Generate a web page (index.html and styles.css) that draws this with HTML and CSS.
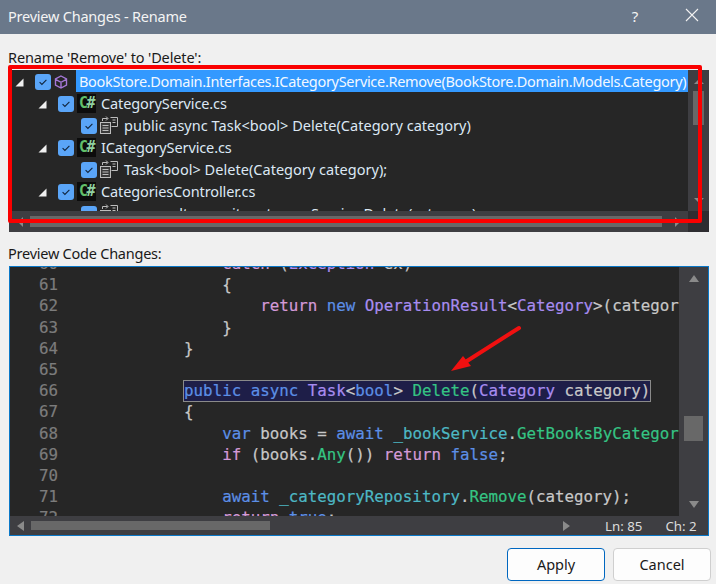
FILE: index.html
```html
<!DOCTYPE html>
<html lang="en">
<head>
<meta charset="utf-8">
<title>Preview Changes - Rename</title>
<link rel="stylesheet" href="styles.css">
</head>
<body>
<svg width="0" height="0" class="defs">
  <defs>
    <symbol id="check" viewBox="0 0 16 16"><rect x="0" y="0" width="16" height="16" rx="3" fill="#5aa5f8"/><path d="M4.6 8.2l2.3 2.3 4.500-4.600" fill="none" stroke="#10243c" stroke-width="1.100"/></symbol>
    <symbol id="twisty" viewBox="0 0 9 9"><path d="M8.500 0.500v8h-8z" fill="#f0f0f0"/></symbol>
    <symbol id="method" viewBox="0 0 18 18"><g fill="none" stroke="#bdbdbd" stroke-width="1"><rect x="0.500" y="6.500" width="10" height="11" fill="#3a3a3a"/><path d="M2.500 9.500h6M2.500 12h6M2.500 14.500h6"/><path d="M10.500 1.500h7v9h-6"/><path d="M12.500 4h3M12.500 6.500h3"/><path d="M2.500 5V2.500h5M6 0.500l2 2-2 2"/></g></symbol>
    <symbol id="cube" viewBox="0 0 14 14"><path d="M7 1l5.500 3v6L7 13l-5.500-3V4zM1.500 4.300L7 7.300l5.500-3M7 7.300V13" fill="none" stroke="#a678d8" stroke-width="1.400"/></symbol>
  </defs>
</svg>
<main class="dialog">
  <header class="titlebar">
    <span class="title">Preview Changes - Rename</span>
    <span class="help">?</span>
    <svg class="close" width="14" height="14" viewBox="0 0 14 14"><path d="M1 1l12 12M13 1L1 13" stroke="#f2f2f2" stroke-width="1.100" fill="none"/></svg>
  </header>
  <section class="content">
    <div class="label label-tree">Rename 'Remove' to 'Delete':</div>
    <div class="panel tree-panel">
      <div class="tree">
        <div class="row lvl0">
          <svg class="twisty"><use href="#twisty"/></svg>
          <svg class="check"><use href="#check"/></svg>
          <svg class="cube"><use href="#cube"/></svg>
          <span class="row-text selected">BookStore.Domain.Interfaces.ICategoryService.Remove(BookStore.Domain.Models.Category)</span>
        </div>
        <div class="row lvl1">
          <svg class="twisty"><use href="#twisty"/></svg>
          <svg class="check"><use href="#check"/></svg>
          <span class="csharp">C<em class="sharp">#</em></span>
          <span class="row-text">CategoryService.cs</span>
        </div>
        <div class="row lvl2">
          <svg class="check"><use href="#check"/></svg>
          <svg class="method"><use href="#method"/></svg>
          <span class="row-text member">public async Task&lt;bool&gt; Delete(Category category)</span>
        </div>
        <div class="row lvl1">
          <svg class="twisty"><use href="#twisty"/></svg>
          <svg class="check"><use href="#check"/></svg>
          <span class="csharp">C<em class="sharp">#</em></span>
          <span class="row-text">ICategoryService.cs</span>
        </div>
        <div class="row lvl2">
          <svg class="check"><use href="#check"/></svg>
          <svg class="method"><use href="#method"/></svg>
          <span class="row-text member">Task&lt;bool&gt; Delete(Category category);</span>
        </div>
        <div class="row lvl1">
          <svg class="twisty"><use href="#twisty"/></svg>
          <svg class="check"><use href="#check"/></svg>
          <span class="csharp">C<em class="sharp">#</em></span>
          <span class="row-text">CategoriesController.cs</span>
        </div>
        <div class="row lvl2">
          <svg class="check"><use href="#check"/></svg>
          <svg class="method"><use href="#method"/></svg>
          <span class="row-text member">var result = await _categoryService.Delete(category);</span>
        </div>
      </div>
      <div class="vbar vbar-tree">
        <span class="arrow-up"></span>
        <span class="vthumb"></span>
        <span class="arrow-down"></span>
      </div>
      <div class="hbar hbar-tree">
        <span class="arrow-left"></span>
        <span class="hthumb"></span>
        <span class="arrow-right"></span>
      </div>
      <div class="corner"></div>
    </div>
    <div class="label label-code">Preview Code Changes:</div>
    <div class="panel code-panel">
      <div class="code">
<div class="ln"><span class="no">60</span><span class="src">            <b class="pk">catch</b> (<b class="ty">Exception</b> <b class="tx">ex</b>)</span></div>
<div class="ln"><span class="no">61</span><span class="src">            {</span></div>
<div class="ln"><span class="no">62</span><span class="src">                <b class="pk">return</b> <b class="kw">new</b> <b class="ty">OperationResult</b>&lt;<b class="ty">Category</b>&gt;(categor</span></div>
<div class="ln"><span class="no">63</span><span class="src">            }</span></div>
<div class="ln"><span class="no">64</span><span class="src">        }</span></div>
<div class="ln"><span class="no">65</span><span class="src"></span></div>
<div class="ln"><span class="no">66</span><span class="src">        <i class="hl"><b class="kw">public</b> <b class="kw">async</b> <b class="ty">Task</b>&lt;<b class="kw">bool</b>&gt; <b class="fn">Delete</b>(<b class="ty">Category</b> category)</i></span></div>
<div class="ln"><span class="no">67</span><span class="src">        {</span></div>
<div class="ln"><span class="no">68</span><span class="src">            <b class="kw">var</b> books = <b class="kw">await</b> <b class="fd">_bookService</b>.<b class="fn">GetBooksByCategor</b></span></div>
<div class="ln"><span class="no">69</span><span class="src">            <b class="pk">if</b> (books.<b class="fn">Any</b>()) <b class="pk">return</b> <b class="kw">false</b>;</span></div>
<div class="ln"><span class="no">70</span><span class="src"></span></div>
<div class="ln"><span class="no">71</span><span class="src">            <b class="kw">await</b> <b class="fd">_categoryRepository</b>.<b class="fn">Remove</b>(category);</span></div>
<div class="ln"><span class="no">72</span><span class="src">            <b class="pk">return</b> <b class="kw">true</b>;</span></div>
      </div>
      <div class="vbar vbar-code">
        <span class="arrow-up big"></span>
        <span class="vthumb"></span>
        <span class="arrow-down big"></span>
      </div>
      <div class="hbar hbar-code">
        <span class="arrow-left big"></span>
        <span class="hthumb"></span>
        <span class="arrow-right big"></span>
        <span class="status">Ln: 85</span>
        <span class="status status-ch">Ch: 2</span>
      </div>
    </div>
    <div class="actions">
      <button class="btn btn-primary">Apply</button>
      <button class="btn">Cancel</button>
    </div>
  </section>
  <div class="annot-box"></div>
  <svg class="annot-arrow" width="80" height="60" viewBox="0 0 80 60"><path d="M76 10L24 43" stroke="#f01010" stroke-width="4" stroke-linecap="round" fill="none"/><path d="M8 53L20 38L28 48z" fill="#f01010"/></svg>
</main>
</body>
</html>
```
FILE: styles.css
```css
* { box-sizing: border-box; }
html, body { margin: 0; padding: 0; }
body { width: 716px; height: 584px; overflow: hidden; background: #f0f0f0; }
.defs { position: absolute; }
.dialog { position: relative; width: 716px; height: 584px; font-family: "Noto Sans", "Open Sans", sans-serif; }

.titlebar { height: 34px; background: #6a788a; color: #f4f4f4; display: flex; align-items: center; padding: 0 0 3px 8px; font-size: 14.500px; }
.title { flex: 1; letter-spacing: -0.22px; }
.help { width: 14px; margin-right: 43px; font-size: 15px; text-align: center; }
.close { margin: 0 17px 1px 0; }

.content { padding: 0 5px 0 9px; }
.label { font-size: 14.500px; color: #1a1a1a; line-height: 20px; letter-spacing: -0.13px; margin-left: -1px; }
.label-tree { padding-top: 13px; height: 36px; }
.label-code { padding-top: 11px; height: 34px; letter-spacing: -0.24px; }

.panel { width: 700px; display: grid; background: #262626; overflow: hidden; }
.tree-panel { height: 162px; grid-template-columns: 679px 21px; grid-template-rows: 141px 21px; background: #262626; }
.code-panel { height: 270px; grid-template-columns: 669px 29px; grid-template-rows: 249px 19px; border: 1px solid #0a78c8; }

.tree { overflow: hidden; color: #dce8f4; font-size: 14.500px; }
.row { height: 22px; display: flex; align-items: center; white-space: nowrap; }
.lvl0 { padding-left: 6px; }
.lvl1 { padding-left: 29px; }
.lvl2 { padding-left: 72px; }
.twisty { width: 9px; height: 9px; margin: 2px 11px 0 0; flex: none; }
.check { width: 16px; height: 16px; flex: none; margin: 2px 3px 0 0; }
.cube { width: 14px; height: 14px; margin: 2px 0 0 0; flex: none; }
.method { width: 18px; height: 18px; margin: 0 6px 0 0; flex: none; }
.csharp { width: 19px; height: 19px; background: #0c0c0c; color: #62c06a; font: bold 15px/19px "DejaVu Sans Mono", monospace; letter-spacing: -1.500px; padding-left: 2px; flex: none; margin-right: 5px; }
.sharp { font-style: normal; color: #8fd0a0; }
.row-text { display: block; letter-spacing: -0.12px; }
.member { letter-spacing: 0.03px; }
.selected { background: #3399ff; color: #f2f8ff; width: 612px; height: 22px; line-height: 22px; padding-left: 3px; overflow: hidden; flex: none; margin-left: 8px; letter-spacing: -0.31px; }

.vbar, .hbar { background: #3e3e42; position: relative; }
.corner { background: #2e2d31; }
.vbar-tree { display: flex; flex-direction: column; align-items: center; }
.vbar-tree .vthumb { width: 11px; height: 34px; background: #686868; margin-top: 7px; }
.vbar-tree .arrow-up { margin-top: 9px; }
.vbar-tree .arrow-down { margin-top: auto; margin-bottom: 8px; }
.arrow-up, .arrow-down, .arrow-left, .arrow-right { width: 0; height: 0; display: block; flex: none; border-style: solid; border-color: transparent; }
.arrow-up { border-width: 0 5.500px 5px; border-bottom-color: #8a8a8a; }
.arrow-down { border-width: 5px 5.500px 0; border-top-color: #8a8a8a; }
.arrow-left { border-width: 5.500px 5px 5.500px 0; border-right-color: #8a8a8a; }
.arrow-right { border-width: 5.500px 0 5.500px 5px; border-left-color: #8a8a8a; }
.arrow-up.big { border-width: 0 5px 7px; margin-top: 8px; }
.arrow-down.big { border-width: 7px 5px 0; margin-top: auto; margin-bottom: 8px; }
.arrow-left.big { border-width: 5.500px 7px 5.500px 0; }
.arrow-right.big { border-width: 5.500px 0 5.500px 7px; }

.hbar { display: flex; align-items: center; }
.hbar-tree { padding: 0 0 0 9px; }
.hbar-tree .hthumb { width: 632px; height: 11px; background: #686868; margin-left: 7px; }
.hbar-tree .arrow-right { margin-left: 13px; }

.code { overflow: hidden; font: 15.800px/21.200px "DejaVu Sans Mono", monospace; color: #c8c8c8; -webkit-text-stroke: 0.2px currentColor; }
.ln { height: 21.200px; display: flex; white-space: pre; position: relative; top: -14px; }
.no { width: 48px; text-align: right; color: #7c7c7c; flex: none; }
.src { margin-left: 50px; flex: none; }
.code b { font-weight: normal; }
.kw { color: #5c8fe6; }
.pk { color: #d49ad8; }
.ty { color: #a88cf0; }
.fn { color: #35c484; }
.fd { color: #4db8c4; }
.tx { color: #c8c8c8; }
.hl { font-style: normal; display: inline-block; background: #1e1e48; outline: 1px solid #8a8a8a; height: 20px; line-height: 20px; }

.vbar-code { display: flex; flex-direction: column; align-items: center; }
.vbar-code .vthumb { width: 19px; height: 25px; background: #686868; margin-top: 134px; }
.vbar-code .arrow-up { margin-top: 8px; }
.hbar-code { grid-column: 1 / 3; padding-left: 7px; }
.hbar-code .hthumb { width: 239px; height: 9px; background: #686868; margin-left: 7px; }
.hbar-code .arrow-right { margin-left: 293px; }
.status { color: #dcdcdc; font-size: 13.300px; margin-left: 35px; }
.status-ch { margin-left: 23px; }

.actions { display: flex; justify-content: flex-end; gap: 8px; margin: 12px 0 0; }
.btn { width: 98px; height: 33px; background: #fdfdfd; border: 1px solid #cfcfcf; border-radius: 4px; font: 14.500px "Noto Sans", sans-serif; color: #1a1a1a; padding: 0 0 2px; }
.btn-primary { border-color: #0067c0; }

.annot-box { position: absolute; left: 8px; top: 65px; width: 694px; height: 158px; border: 4px solid #fa0000; border-radius: 2px; pointer-events: none; }
.annot-arrow { position: absolute; left: 443px; top: 318px; }
```
